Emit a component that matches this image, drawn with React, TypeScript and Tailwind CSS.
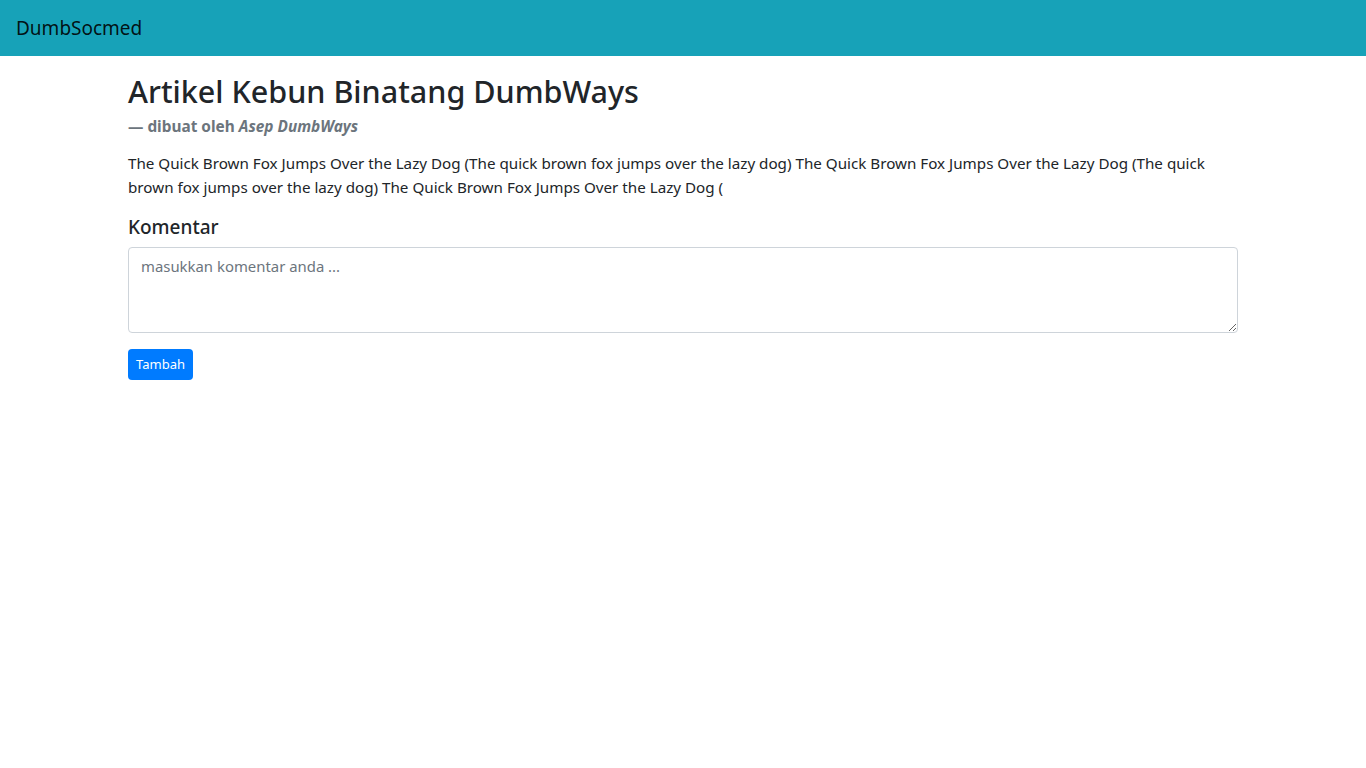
import React from 'react';

const font = { fontFamily: '"Noto Sans", "Open Sans", sans-serif' };

const App: React.FC = () => {
  return (
    <div className="min-h-screen bg-white text-[#212529]" style={font}>
      <nav className="h-14 bg-[#17a2b8] flex items-center px-4">
        <span className="text-[19px] text-black/90 leading-[30px]">DumbSocmed</span>
      </nav>

      <div className="w-[1110px] mx-auto pt-4">
        <h2 className="text-[30.5px] font-medium leading-[38px]">Artikel Kebun Binatang DumbWays</h2>
        <p className="mt-[5px] text-[15.4px] font-bold leading-6 text-[#6c757d]">
          — dibuat oleh <em>Asep DumbWays</em>
        </p>
        <p className="mt-3 text-[15.2px] leading-6">
          The Quick Brown Fox Jumps Over the Lazy Dog (The quick brown fox jumps over the lazy dog) The Quick Brown Fox
          Jumps Over the Lazy Dog (The quick brown fox jumps over the lazy dog) The Quick Brown Fox Jumps Over the Lazy
          Dog (
        </p>
        <h5 className="mt-4 text-[19px] font-medium leading-6">Komentar</h5>
        <textarea
          rows={3}
          placeholder="masukkan komentar anda ..."
          className="mt-2 block w-full h-[86px] rounded border border-[#ced4da] px-3 py-1.5 text-[14.9px] leading-6 placeholder:text-[#6c757d] outline-none"
          style={font}
        />
        <button className="mt-4 h-[31px] px-2 rounded bg-[#007bff] text-white text-[13px] leading-[21px]">
          Tambah
        </button>
      </div>
    </div>
  );
};

export default App;
